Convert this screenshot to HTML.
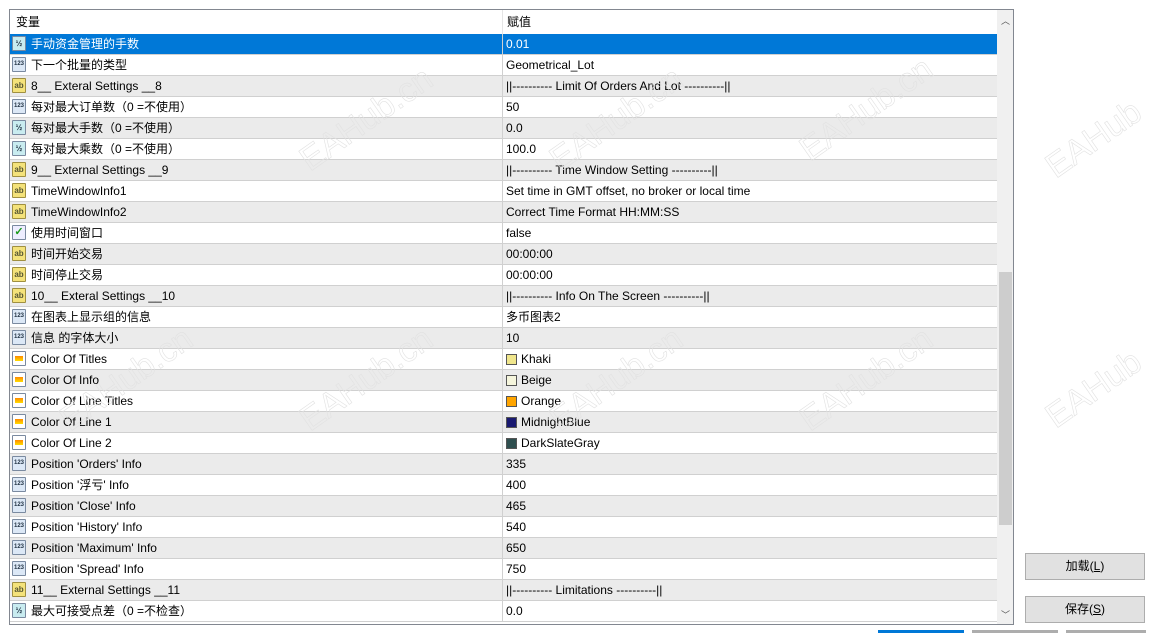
<!DOCTYPE html>
<html><head><meta charset="utf-8"><style>
body{margin:0;width:1155px;height:633px;background:#fff;font-family:"Liberation Sans","Noto Sans CJK SC",sans-serif;font-size:12px;color:#000;position:relative;overflow:hidden}
#tbl{position:absolute;left:9px;top:9px;width:1005px;height:616px;border:1px solid #828790;box-sizing:border-box;overflow:hidden}
.hdr{position:absolute;left:0;top:0;height:24px;width:988px;background:#fff;border-bottom:1px solid #e5e5e5}
.hdr span{position:absolute;top:0;line-height:24px;height:24px}
.row{position:absolute;left:0;width:987px;height:21px;box-sizing:border-box;border-bottom:1px solid #d0d0d0}
.row.g{background:#ebebeb}
.row.sel{background:#0078d7;color:#fff}
.c1,.c2{position:absolute;top:0;height:20px;line-height:20px;white-space:nowrap}
.c1{left:21px}
.c2{left:496px}
.div{position:absolute;left:492px;top:0;width:1px;height:21px;background:#d0d0d0}
.ic{position:absolute;left:2px;top:2px;width:14px;height:15px;border:1px solid #7a8aa0;border-radius:1px;box-sizing:border-box;font-size:8px;font-weight:bold;line-height:13px;text-align:center;font-family:"Liberation Sans",sans-serif}
.n{background:#dce8f6;color:#234;}
.h{background:#c9ecf0;color:#234}
.a{background:#f4e27a;color:#553;border-color:#a09040}
.c{background:#fff}
.c::after{content:"";position:absolute;left:2px;top:4px;width:8px;height:5px;background:linear-gradient(#f80,#fd0)}
.b{background:#eef;}
.sw{display:inline-block;width:11px;height:11px;border:1px solid #555;vertical-align:-2px;margin-right:4px;box-sizing:border-box}
#sb{position:absolute;left:987px;top:0;width:17px;height:614px;background:#f0f0f0}
#th{position:absolute;left:2px;top:262px;width:13px;height:253px;background:#cdcdcd}
.btn{position:absolute;left:1025px;width:120px;height:27px;background:#e1e1e1;border:1px solid #adadad;box-sizing:border-box;text-align:center;line-height:25px;font-size:12px}
.wm{position:absolute;font-size:34px;color:transparent;-webkit-text-stroke:0.6px #e2e2e2;transform:rotate(-35deg);white-space:nowrap}
</style></head><body>
<div id="tbl">
<div class="hdr"><span style="left:6px">变量</span><span style="left:497px">赋值</span><div style="position:absolute;left:492px;top:0;width:1px;height:24px;background:#e5e5e5"></div></div>
<div id="rows"></div>
<div id="sb"><div style="position:absolute;left:4px;top:4px;font-size:9px;color:#555">︿</div><div id="th"></div><div style="position:absolute;left:4px;top:598px;font-size:9px;color:#555">﹀</div></div>
</div>
<div class="btn" style="top:553px">加载(<u>L</u>)</div>
<div class="btn" style="top:596px">保存(<u>S</u>)</div>
<div style="position:absolute;left:878px;top:630px;width:86px;height:3px;background:#0078d7"></div>
<div style="position:absolute;left:972px;top:630px;width:86px;height:3px;background:#adadad"></div>
<div style="position:absolute;left:1066px;top:630px;width:80px;height:3px;background:#adadad"></div>
<div class="wm" style="left:290px;top:100px">EAHub.cn</div>
<div class="wm" style="left:540px;top:100px">EAHub.cn</div>
<div class="wm" style="left:790px;top:90px">EAHub.cn</div>
<div class="wm" style="left:1040px;top:120px">EAHub</div>
<div class="wm" style="left:50px;top:360px">EAHub.cn</div>
<div class="wm" style="left:290px;top:360px">EAHub.cn</div>
<div class="wm" style="left:540px;top:360px">EAHub.cn</div>
<div class="wm" style="left:790px;top:360px">EAHub.cn</div>
<div class="wm" style="left:1040px;top:370px">EAHub</div>
<script>
var d=[["h","手动资金管理的手数","0.01"],["n","下一个批量的类型","Geometrical_Lot"],["a","8__ Exteral Settings __8","||---------- Limit Of Orders And Lot ----------||"],["n","每对最大订单数（0 =不使用）","50"],["h","每对最大手数（0 =不使用）","0.0"],["h","每对最大乘数（0 =不使用）","100.0"],["a","9__ External Settings __9","||---------- Time Window Setting ----------||"],["a","TimeWindowInfo1","Set time in GMT offset, no broker or local time"],["a","TimeWindowInfo2","Correct Time Format HH:MM:SS"],["b","使用时间窗口","false"],["a","时间开始交易","00:00:00"],["a","时间停止交易","00:00:00"],["a","10__ Exteral Settings __10","||---------- Info On The Screen ----------||"],["n","在图表上显示组的信息","多币图表2"],["n","信息 的字体大小","10"],["c","Color Of Titles","#f0e68c|Khaki"],["c","Color Of Info","#f5f5dc|Beige"],["c","Color Of Line Titles","#ffa500|Orange"],["c","Color Of Line 1","#191970|MidnightBlue"],["c","Color Of Line 2","#2f4f4f|DarkSlateGray"],["n","Position 'Orders' Info","335"],["n","Position '浮亏' Info","400"],["n","Position 'Close' Info","465"],["n","Position 'History' Info","540"],["n","Position 'Maximum' Info","650"],["n","Position 'Spread' Info","750"],["a","11__ External Settings __11","||---------- Limitations ----------||"],["h","最大可接受点差（0 =不检查）","0.0"]];
var lab={h:"½",n:"123",a:"ab",c:"",b:"✓"};
var s="";
d.forEach(function(r,i){
var cls=i==0?"sel":(i%2==0?"g":"");
var v=r[2];
if(r[0]=="c"){var p=v.split("|");v='<span class="sw" style="background:'+p[0]+'"></span>'+p[1];}
var st=r[0]=="b"?' style="color:#1a9a1a;font-size:11px"':(r[0]=="n"?' style="font-size:6px"':'');
s+='<div class="row '+cls+'" style="top:'+(24+i*21)+'px"><div class="ic '+r[0]+'"'+st+'>'+lab[r[0]]+'</div><span class="c1">'+r[1]+'</span><div class="div"></div><span class="c2">'+v+'</span></div>';
});
document.getElementById("rows").innerHTML=s;
</script>
</body></html>
